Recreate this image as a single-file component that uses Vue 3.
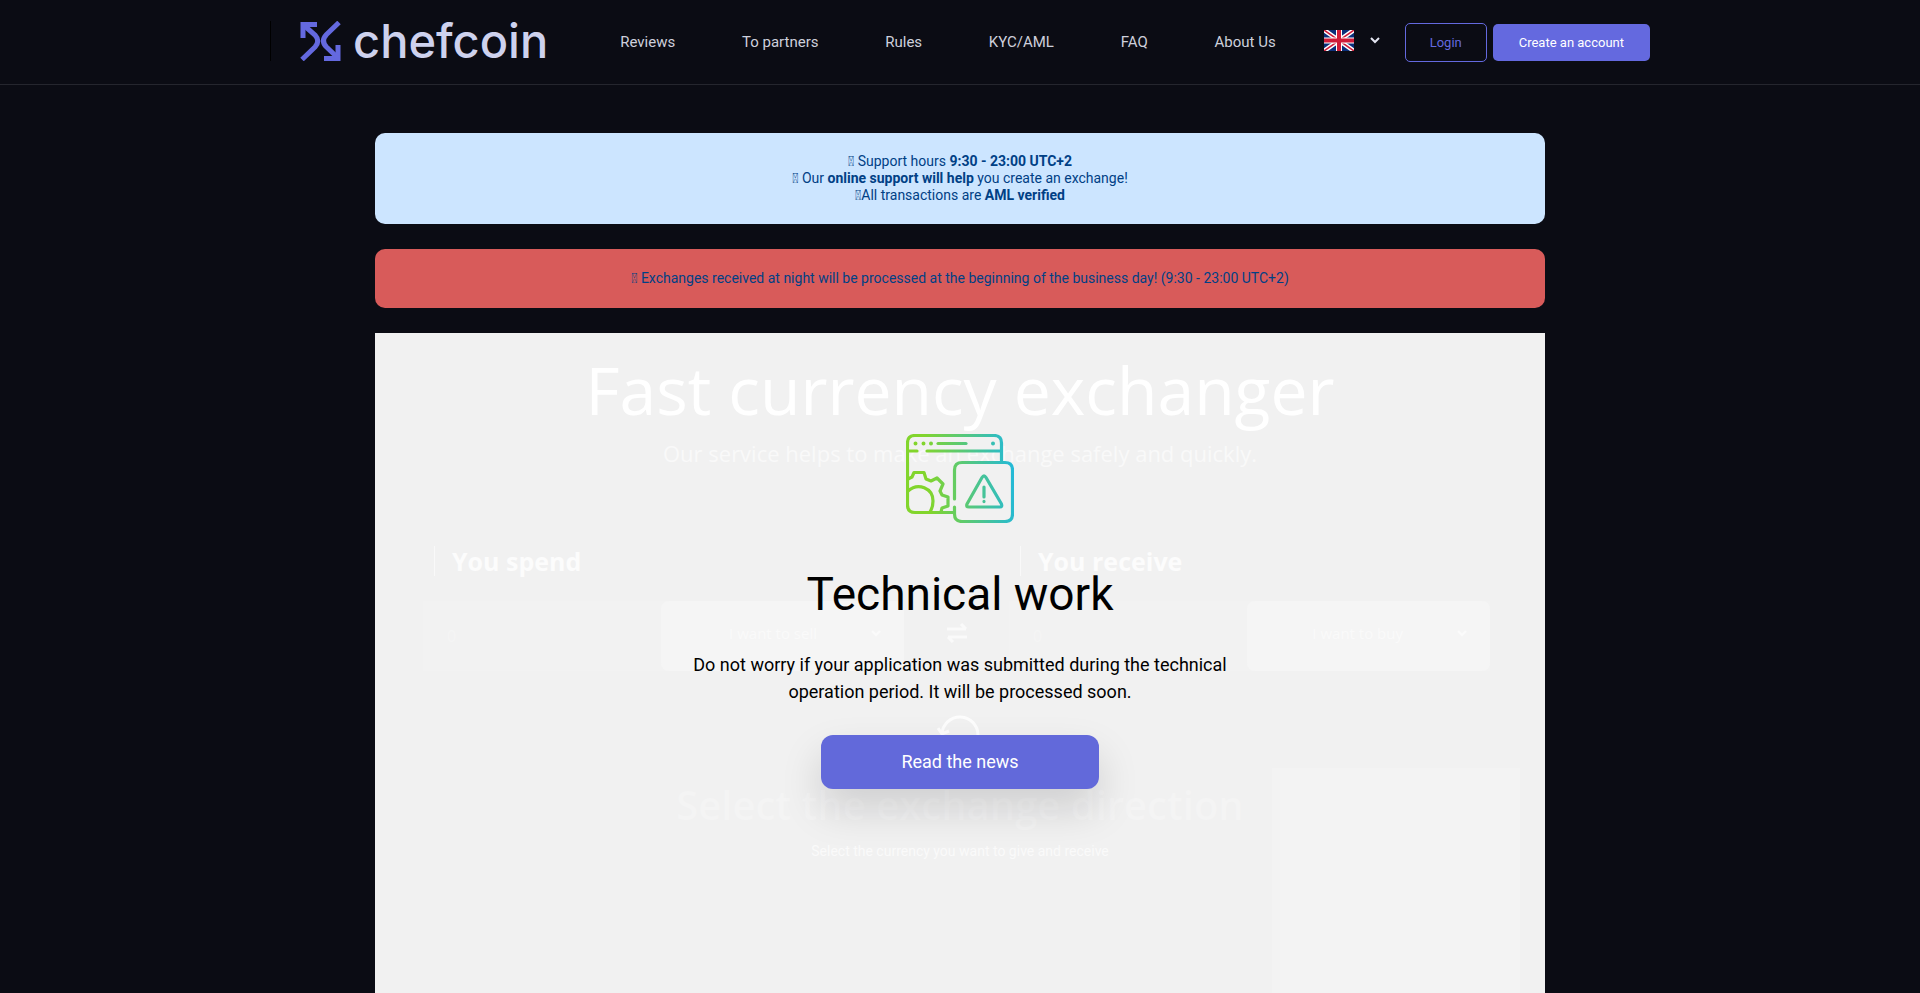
<template>
  <div class="page">
    <header class="header">
      <div class="header-inner">
        <a href="#" class="logo">
          <svg class="logo-mark" viewBox="0 0 41 40" aria-hidden="true">
            <g fill="none" stroke="#6469df" stroke-width="5">
              <path d="M3 17V3.500H17" />
              <path d="M38 24V37.500H24" />
              <path d="M3 3.500L15 14Q20.500 20 15 26L2 38.500" />
              <path d="M38 37L26.500 26Q20.500 20 26.500 13.500L39 1.500" />
            </g>
          </svg>
          <span class="logo-text">chefcoin</span>
        </a>

        <nav class="nav">
          <a v-for="item in menu" :key="item" href="#" class="nav-link">{{ item }}</a>
        </nav>

        <button class="lang" aria-label="English">
          <svg class="flag" viewBox="0 0 30 21">
            <rect width="30" height="21" fill="#0a2f7a" />
            <path d="M0 0L30 21M30 0L0 21" stroke="#fff" stroke-width="4.500" />
            <path d="M0 0L30 21M30 0L0 21" stroke="#cf1b38" stroke-width="1.500" />
            <path d="M15 0V21M0 10.500H30" stroke="#fff" stroke-width="6" />
            <path d="M15 0V21M0 10.500H30" stroke="#cf1b38" stroke-width="4" />
          </svg>
          <svg class="chevron" viewBox="0 0 10 7">
            <path d="M1 1L5 5L9 1" fill="none" stroke="#e4e6f2" stroke-width="2" />
          </svg>
        </button>

        <div class="auth">
          <button class="btn-login">Login</button>
          <button class="btn-create">Create an account</button>
        </div>
      </div>
    </header>

    <main class="container">
      <div class="notice info">
        <div>&#xE001; Support hours <b>9:30 - 23:00 UTC+2</b></div>
        <div>&#xE001; Our <b>online support will help</b> you create an exchange!</div>
        <div>&#xE001;All transactions are <b>AML verified</b></div>
      </div>
      <div class="notice danger">
        <div>&#xE001; Exchanges received at night will be processed at the beginning of the business day! (9:30 - 23:00 UTC+2)</div>
      </div>

      <section class="panel">
        <!-- exchanger, faded out while the works are going on -->
        <div class="exchanger">
          <h1 class="ex-title">Fast currency exchanger</h1>
          <p class="ex-sub">Our service helps to make an exchange safely and quickly.</p>

          <div class="ex-form">
            <div v-for="side in sides" :key="side.id" class="side">
              <label :for="side.id" class="side-label">{{ side.label }}</label>
              <div class="field">
                <input :id="side.id" class="amount" type="text" placeholder="0" />
                <button class="currency">
                  <span>{{ side.select }}</span>
                  <svg class="chevron" viewBox="0 0 10 7">
                    <path d="M1 1L5 5L9 1" fill="none" stroke="#fbfbfb" stroke-width="2" />
                  </svg>
                </button>
              </div>
            </div>
            <svg class="swap" viewBox="0 0 24 20">
              <path d="M2 6H21M16 1L21 6M22 14H3M8 19L3 14" fill="none" stroke="#fafafa" stroke-width="3" />
            </svg>
          </div>

          <svg class="refresh" viewBox="0 0 46 46">
            <path d="M5 20A18 18 0 1 1 23 39M1 14L5 20L12 17" fill="none" stroke="#fdfdfd" stroke-width="3" />
          </svg>
          <h2 class="ex-direction">Select the exchange direction</h2>
          <p class="ex-hint">Select the currency you want to give and receive</p>
          <div class="ex-aside"></div>
        </div>

        <div class="tech">
          <svg class="tech-icon" viewBox="0 0 108 89">
            <defs>
              <linearGradient id="tech-grad" gradientUnits="userSpaceOnUse" x1="0" y1="50" x2="108" y2="40">
                <stop offset="0.200" stop-color="#82d52c" />
                <stop offset="1" stop-color="#23b9d8" />
              </linearGradient>
            </defs>
            <g fill="none" stroke="url(#tech-grad)" stroke-width="3.200" stroke-linecap="round" stroke-linejoin="round">
              <path d="M47 78.500H9Q1.500 78.500 1.500 71V9Q1.500 1.500 9 1.500H88Q95.500 1.500 95.500 9V27" />
              <path d="M2 17H11M21 17.010H95" />
              <path d="M32 9.500H60" />
              <path d="M9.500 9.400V9.600M17.500 9.400V9.600M25 9.400V9.600M87 9.400V9.600" stroke-width="4" />
              <path d="M48.500 65V36Q48.500 28.500 56 28.500H99Q106.500 28.500 106.500 36V80Q106.500 87.500 99 87.500H56Q48.500 87.500 48.500 80V73" />
              <path d="M76 43.500Q78 40 80 43.500L95.500 70Q96.500 73 94 73H63Q59.500 73 61 70Z" />
              <path d="M78 53V63M78 67.400V67.600" />
              <path d="M2 45L6 43L8 38.500H18L20 45L25 47L31 44L37 50L34 57L36 61L42 63V72L36 74L35 78" />
              <path d="M2 57C12 48 27 54 27 67Q27 73 24 78" />
            </g>
          </svg>
          <h2 class="tech-title">Technical work</h2>
          <p class="tech-text">Do not worry if your application was submitted during the technical operation period. It will be processed soon.</p>
          <a href="#" class="tech-btn">Read the news</a>
        </div>
      </section>
    </main>
  </div>
</template>

<script setup>
const menu = ['Reviews', 'To partners', 'Rules', 'KYC/AML', 'FAQ', 'About Us'];

const sides = [
  { id: 'spend', label: 'You spend', select: 'I want to sell' },
  { id: 'receive', label: 'You receive', select: 'I want to buy' },
];
</script>

<style>
body {
  margin: 0;
  background: #0b0c14;
}
</style>

<style scoped>
.page {
  display: flex;
  flex-direction: column;
  min-height: 100vh;
  font-family: Roboto, "Liberation Sans", sans-serif;
}

.page * {
  box-sizing: border-box;
}

h1,
h2,
p {
  margin: 0;
}

button,
input {
  font-family: inherit;
}

.header {
  border-bottom: 1px solid #25262e;
}

.header-inner {
  display: flex;
  align-items: center;
  max-width: 1380px;
  height: 84px;
  margin: 0 auto;
  padding-bottom: 3px;
}

.logo {
  display: flex;
  align-items: center;
  gap: 12px;
  height: 40px;
  padding-left: 29px;
  border-left: 1px solid #000;
  text-decoration: none;
}

.logo-mark {
  width: 41px;
  height: 40px;
}

.logo-text {
  font-family: Inter, sans-serif;
  font-size: 47px;
  font-weight: 500;
  line-height: 40px;
  color: #ced2ee;
}

.nav {
  display: flex;
  flex: 1;
  justify-content: space-between;
  margin: 0 48px 0 72px;
}

.nav-link {
  padding-top: 3px;
  font-size: 15px;
  color: #ced0dc;
  text-decoration: none;
}

.lang {
  display: flex;
  align-items: center;
  gap: 16px;
  padding: 0;
  border: none;
  background: none;
}

.flag {
  width: 30px;
  height: 21px;
}

.chevron {
  width: 10px;
  height: 7px;
}

.auth {
  display: flex;
  align-items: center;
  gap: 6px;
  margin-left: 25px;
  padding-top: 3px;
}

.btn-login,
.btn-create {
  font-size: 13px;
  border-radius: 5px;
}

.btn-login {
  height: 39px;
  padding: 0 24px;
  border: 1px solid #6469df;
  background: transparent;
  color: #6469df;
}

.btn-create {
  height: 37px;
  padding: 0 26px;
  border: none;
  background: #6469df;
  color: #fff;
}

.container {
  display: flex;
  flex: 1;
  flex-direction: column;
  gap: 25px;
  width: 100%;
  max-width: 1170px;
  margin: 0 auto;
  padding-top: 48px;
}

.notice {
  padding: 20px;
  border-radius: 10px;
  font-size: 14px;
  line-height: 17px;
  text-align: center;
  color: #004085;
}

.info {
  background: #cce5ff;
}

.danger {
  padding: 21px;
  background: #d85b5a;
}

.panel {
  display: grid;
  flex: 1;
  background: #f1f1f1;
}

.exchanger,
.tech {
  grid-area: 1 / 1;
}

.exchanger {
  display: grid;
  grid-template-columns: 1fr 248px;
  grid-template-rows: 88px 40px 198px 89px 10px 70px 22px 1fr;
  justify-items: center;
  align-items: center;
  padding: 12px 25px 0;
  color: #fff;
  font-family: "Open Sans", sans-serif;
}

.exchanger > * {
  grid-column: 1 / 3;
}

.ex-title {
  font-size: 66px;
  font-weight: 500;
  line-height: 84px;
}

.ex-sub {
  font-size: 22px;
  line-height: 26px;
  color: #f9f9f9;
}

.ex-form {
  display: grid;
  grid-template-columns: minmax(0, 1fr) minmax(0, 1fr);
  align-self: end;
  gap: 105px;
  width: 100%;
  padding: 0 30px 0 23px;
}

.side {
  display: flex;
  flex-direction: column;
  gap: 25px;
}

.side-label {
  padding-left: 17px;
  border-left: 1px solid #f9f9f9;
  margin-left: 11px;
  font-size: 25px;
  font-weight: 700;
  line-height: 30px;
  color: #fcfcfc;
}

.field {
  display: flex;
  height: 70px;
  background: #f2f2f2;
}

.amount {
  flex: 1;
  min-width: 0;
  padding: 0 24px;
  border: none;
  background: none;
  font-size: 16px;
}

.amount::placeholder {
  color: #f5f5f5;
}

.currency {
  display: flex;
  flex: none;
  align-items: center;
  justify-content: flex-end;
  gap: 54px;
  width: 243px;
  padding: 0 23px 6px;
  border: none;
  border-radius: 8px;
  background: #f5f5f5;
  color: #fafafa;
  font-size: 15px;
}

.swap {
  grid-area: 1 / 1 / 2 / 3;
  align-self: end;
  justify-self: center;
  width: 24px;
  height: 20px;
  margin-bottom: 28px;
}

.side:nth-child(1) {
  grid-area: 1 / 1;
}

.side:nth-child(2) {
  grid-area: 1 / 2;
}

.refresh {
  align-self: end;
  width: 46px;
  height: 46px;
}

.ex-direction {
  grid-row: 6;
  font-size: 40px;
  font-weight: 600;
  line-height: 48px;
  color: #f4f4f4;
}

.ex-hint {
  grid-row: 7;
  font-family: Roboto, sans-serif;
  font-size: 14px;
  color: #fafafa;
}

.exchanger .ex-aside {
  grid-column: 2;
  grid-row: 5 / 9;
  align-self: stretch;
  justify-self: stretch;
  margin-top: 8px;
  background: #f3f3f3;
}

.tech {
  z-index: 1;
  display: flex;
  flex-direction: column;
  align-items: center;
  padding-top: 101px;
  text-align: center;
  color: #000;
}

.tech-icon {
  width: 108px;
  height: 89px;
}

.tech-title {
  margin-top: 43px;
  font-size: 46px;
  font-weight: 400;
  line-height: 56px;
}

.tech-text {
  max-width: 560px;
  margin-top: 29px;
  font-size: 18px;
  line-height: 27px;
}

.tech-btn {
  width: 278px;
  margin-top: 30px;
  border-radius: 12px;
  background: #6269da;
  box-shadow: 0 20px 40px rgba(11, 12, 20, 0.15);
  font-size: 18px;
  line-height: 54px;
  color: #fff;
  text-decoration: none;
}
</style>
